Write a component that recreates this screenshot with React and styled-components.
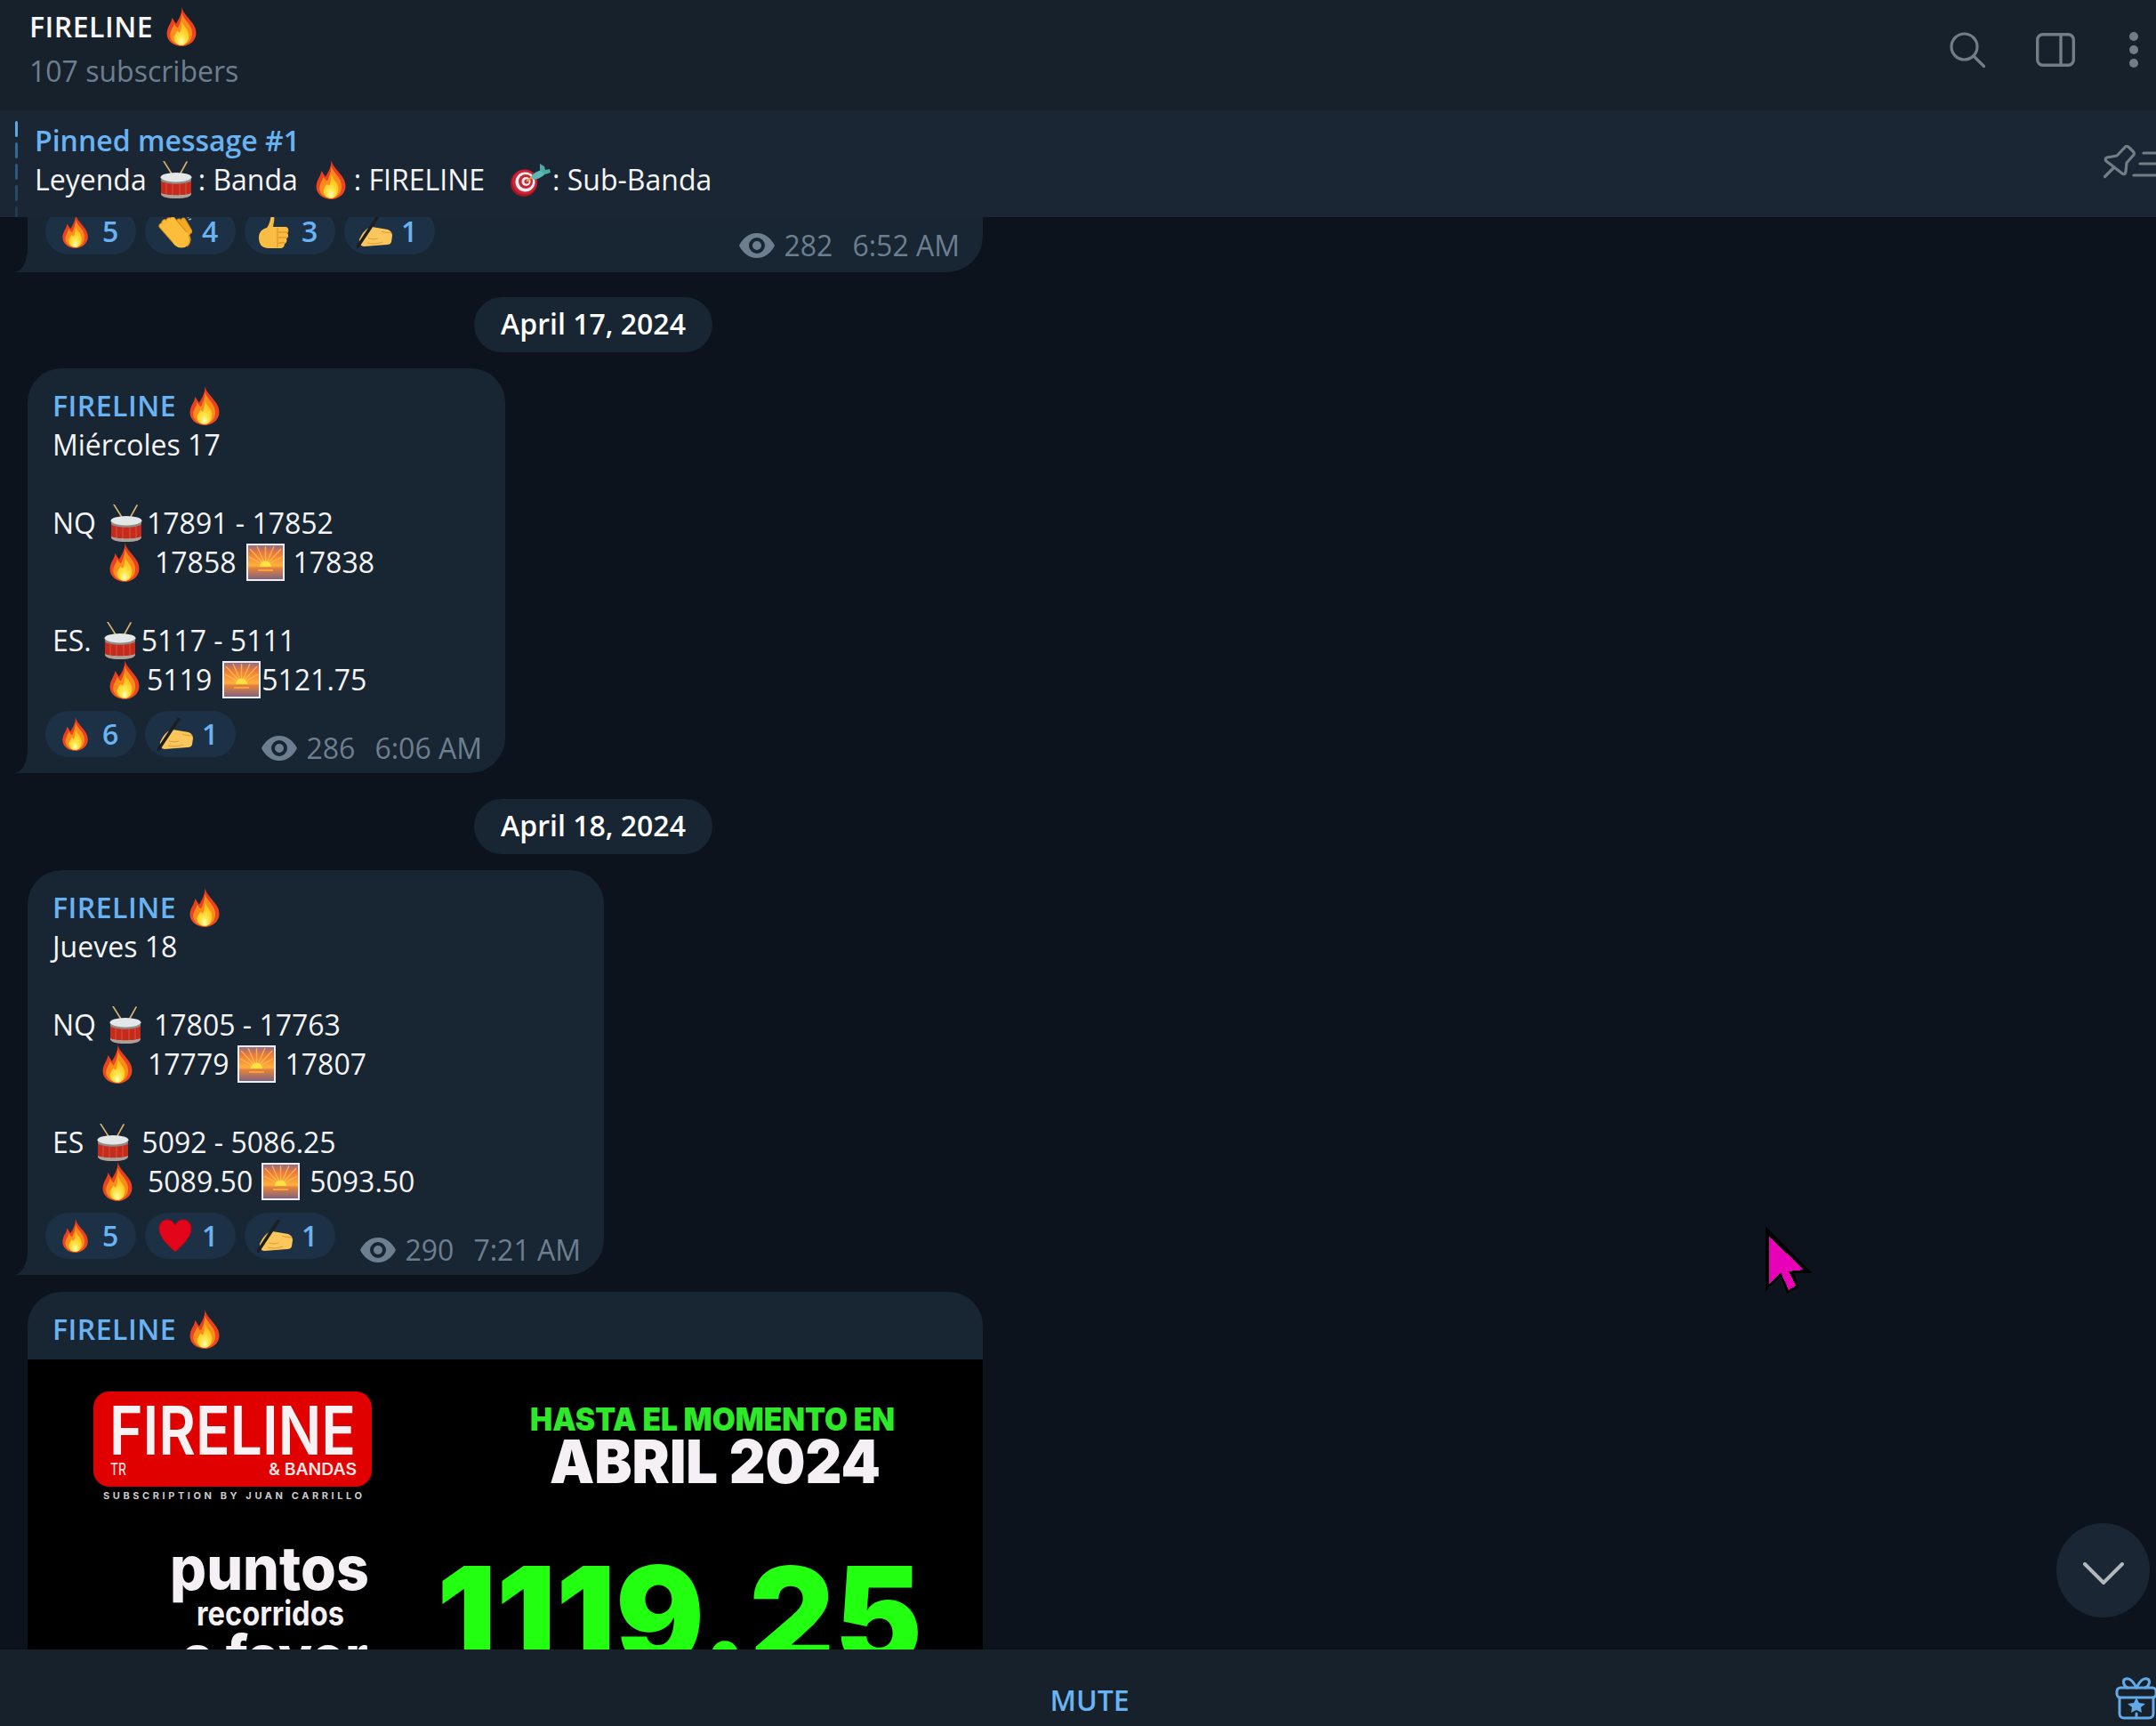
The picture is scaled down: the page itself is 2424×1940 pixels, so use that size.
import styled, { createGlobalStyle } from 'styled-components';

const GlobalStyle = createGlobalStyle`
  html, body {
    margin: 0;
    padding: 0;
    background: #0e1621;
  }
`;

const Page = styled.div`
  position: relative;
  width: 2424px;
  height: 1940px;
  display: flex;
  flex-direction: column;
  overflow: hidden;
  background: #0c131d;
  color: #f5f5f5;
  font-family: "Open Sans", "Noto Sans", sans-serif;
  font-size: 32px;
  line-height: 44px;
`;

const Header = styled.header`
  flex: none;
  height: 124px;
  box-sizing: border-box;
  padding: 8px 20px 0 33px;
  display: flex;
  align-items: flex-start;
  justify-content: space-between;
  background: #17212b;
`;

const TitleBlock = styled.div`
  display: flex;
  flex-direction: column;
  gap: 6px;
`;

const Title = styled.div`
  display: flex;
  align-items: center;
  gap: 14px;
  font-weight: 600;
  letter-spacing: 0.5px;
`;

const Subscribers = styled.div`
  color: #6d7f8f;
`;

const HeaderIcons = styled.div`
  display: flex;
  align-items: center;
  gap: 57px;
  padding-top: 28px;
  color: #737d86;

  & > svg:last-child {
    margin-left: 4px;
  }
`;

const PinnedBar = styled.section`
  flex: none;
  height: 120px;
  box-sizing: border-box;
  padding: 12px 0 0 17px;
  display: flex;
  align-items: flex-start;
  background: #1a2633;
  overflow: hidden;
`;

const PinnedTicks = styled.div`
  flex: none;
  width: 3px;
  display: flex;
  flex-direction: column;
  gap: 6px;
  margin-right: 19px;
`;

const Tick = styled.span`
  display: block;
  height: 18px;
  border-radius: 2px;
  background: ${(p) => p.$color};
`;

const PinnedText = styled.div`
  flex: 1;
`;

const PinnedTitle = styled.div`
  color: #6ab3f3;
  font-weight: 600;
`;

const TextLine = styled.div`
  white-space: pre;
  height: 44px;
  display: flex;
  align-items: center;
`;

const PinButton = styled.div`
  flex: none;
  margin: 27px -5px 0 0;
  color: #737d86;
  display: flex;
`;

const Messages = styled.main`
  flex: 1;
  min-height: 0;
  overflow: hidden;
  padding-left: 31px;
  display: flex;
  flex-direction: column;
`;

const Bubble = styled.article`
  position: relative;
  flex: none;
  width: ${(p) => p.$width}px;
  box-sizing: border-box;
  padding: 20px 26px 18px 20px;
  background: #182533;
  border-radius: 38px 38px 40px 0;

  &::before {
    content: '';
    position: absolute;
    left: -15px;
    bottom: 0;
    width: 15px;
    height: 26px;
    background: radial-gradient(ellipse 15px 26px at 0 0, transparent 98%, #182533 100%);
  }
`;

const ClippedBubble = styled(Bubble)`
  height: 62px;
  padding: 0 26px 20px 20px;
  border-radius: 0 0 40px 0;
  display: flex;
  align-items: flex-end;
  justify-content: space-between;
`;

const PhotoBubble = styled.article`
  flex: none;
  width: 1074px;
  margin-top: 19px;
  background: #182533;
  border-radius: 38px 38px 0 0;
  overflow: hidden;
`;

const PhotoName = styled.div`
  height: 76px;
  box-sizing: border-box;
  padding: 8px 0 0 28px;
  display: flex;
  align-items: center;
  gap: 14px;
  color: #6ab3f3;
  font-weight: 600;
  letter-spacing: 0.5px;
`;

const Poster = styled.svg`
  display: block;
  background: #000;
`;

const BubbleBody = styled.div`
  margin-left: 8px;
`;

const SenderName = styled.div`
  height: 44px;
  display: flex;
  align-items: center;
  gap: 14px;
  color: #6ab3f3;
  font-weight: 600;
  letter-spacing: 0.5px;
`;

const BubbleFooter = styled.div`
  display: flex;
  align-items: flex-end;
  justify-content: space-between;
  margin-top: 13px;
`;

const Reactions = styled.div`
  display: flex;
  gap: 10px;
  flex: none;
`;

const Reaction = styled.div`
  width: 102px;
  height: 52px;
  box-sizing: border-box;
  padding-left: 14px;
  display: flex;
  align-items: center;
  gap: 10px;
  border-radius: 26px;
  background: #1c3146;
  color: #6ab3f3;
  font-weight: 600;
`;

const ReactionEmoji = styled.span`
  flex: none;
  width: 40px;
  display: flex;
  justify-content: center;
`;

const Meta = styled.div`
  display: flex;
  align-items: center;
  height: 44px;
  margin-bottom: -12px;
  color: #6d7f8f;
  flex: none;
`;

const Views = styled.span`
  margin: 0 22px 0 10px;
`;

const DateRow = styled.div`
  flex: none;
  width: 1272px;
  display: flex;
  justify-content: center;
  margin: ${(p) => p.$top}px 0 18px;
`;

const DatePill = styled.div`
  width: 268px;
  height: 62px;
  box-sizing: border-box;
  padding-bottom: 2px;
  display: flex;
  align-items: center;
  justify-content: center;
  border-radius: 31px;
  background: #182533;
  font-weight: 600;
  color: #fff;
`;

const Footer = styled.footer`
  flex: none;
  height: 86px;
  display: flex;
  align-items: flex-end;
  background: #17212b;
`;

const MuteLabel = styled.div`
  flex: 1;
  height: 86px;
  box-sizing: border-box;
  padding: 28px 0 0 72px;
  display: flex;
  align-items: center;
  justify-content: center;
  color: #6ab3f3;
  font-weight: 600;
`;

const GiftButton = styled.div`
  flex: none;
  width: 46px;
  height: 56px;
  overflow: hidden;
  color: #62a9e6;
`;

const ScrollDown = styled.div`
  position: absolute;
  left: 2312px;
  top: 1712px;
  width: 105px;
  height: 106px;
  box-sizing: border-box;
  padding-top: 8px;
  border-radius: 50%;
  background: #1a2633;
  display: flex;
  align-items: center;
  justify-content: center;
  color: #b5b8bb;
`;

const Cursor = styled.svg`
  position: absolute;
  left: 1985px;
  top: 1378px;
`;

const EmojiBox = styled.svg`
  flex: none;
  display: block;
  margin: ${(p) => p.$margin || '0'};
`;

const Fire = ({ w = 37, h = 44, margin }) => (
  <EmojiBox width={w} height={h} viewBox="0 0 32 40" $margin={margin}>
    <defs>
      <linearGradient id="fireOuter" x1="0" y1="0" x2="0" y2="1">
        <stop offset="0" stopColor="#e53a1e" />
        <stop offset="1" stopColor="#ef4a20" />
      </linearGradient>
      <radialGradient id="fireCore" cx="0.5" cy="0.85" r="0.6">
        <stop offset="0" stopColor="#fffde8" />
        <stop offset="0.28" stopColor="#ffee58" />
        <stop offset="1" stopColor="#ffc21a" />
      </radialGradient>
    </defs>
    <path d="M16 0C17 7 25 12 29 20C33 29 29 38 17 40C5 40 -1 32 1 24C2 19 5 17 6 11C8 14 9 16 10 17C13 12 16 7 16 0Z" fill="url(#fireOuter)" />
    <path d="M16 6C17 12 24 16 26 23C28 31 24 38 16.5 39C8 39 3 33 4 27C5 23 7 21 8 17C10 20 11 21 12 21C14 17 16 12 16 6Z" fill="#fb8c1c" />
    <path d="M16 14C17 19 22 22 23 27C24 33 21 38 16.5 39C11 39 7 35 8 30C9 28 10 26 11.5 24C12.5 25.5 13.5 26 14 26C15 23 16 19 16 14Z" fill="url(#fireCore)" />
  </EmojiBox>
);

const Drum = ({ margin }) => (
  <EmojiBox width={36} height={42} viewBox="0 0 36 42" $margin={margin}>
    <path d="M4 0L16 19M30 1L20 19" stroke="#d8b26e" strokeWidth="1.6" strokeLinecap="round" />
    <path d="M1 20H35V37C35 40 28 42 18 42S1 40 1 37Z" fill="#c62a1c" />
    <path d="M7 25V38M14 26V40M22 26V40M29 25V38" stroke="#e88a5a" strokeWidth="0.8" opacity="0.6" />
    <path d="M1 36C6 39 30 39 35 36V37C35 40 28 42 18 42S1 40 1 37Z" fill="#a9a29a" />
    <ellipse cx="18" cy="18.5" rx="17.5" ry="5.5" fill="#e4e7e7" />
    <path d="M1 19C5 25 31 25 35 19V22C31 27 5 27 1 22Z" fill="#8d8d88" />
  </EmojiBox>
);

const Sunrise = ({ margin }) => (
  <EmojiBox width={43} height={42} viewBox="0 0 43 42" $margin={margin}>
    <defs>
      <linearGradient id="sunSky" x1="0" y1="0" x2="0" y2="1">
        <stop offset="0" stopColor="#8a6a8e" />
        <stop offset="0.25" stopColor="#ef7a3a" />
        <stop offset="0.6" stopColor="#ffb13b" />
        <stop offset="0.66" stopColor="#e4833c" />
        <stop offset="1" stopColor="#7c5f82" />
      </linearGradient>
    </defs>
    <rect x="1" y="1" width="41" height="40" fill="url(#sunSky)" stroke="#eceff1" strokeWidth="2" />
    <path d="M21.5 25L4 6M21.5 25L12 3M21.5 25V3M21.5 25L31 3M21.5 25L39 6M21.5 25L3 15M21.5 25L40 15" stroke="#ffc04d" strokeWidth="1.4" opacity="0.8" />
    <path d="M15 26A6.5 6.5 0 0 1 28 26Z" fill="#ffe23f" />
    <rect x="13" y="29" width="17" height="2" fill="#f9a03f" />
  </EmojiBox>
);

const Target = ({ margin }) => (
  <EmojiBox width={46} height={37} viewBox="0 0 46 37" $margin={margin}>
    <ellipse cx="16" cy="22" rx="15" ry="15" fill="#a3152a" />
    <circle cx="17" cy="20.5" r="14" fill="#cf2233" />
    <circle cx="17.5" cy="20.5" r="11" fill="#eceff1" />
    <circle cx="18" cy="20" r="8" fill="#c62838" />
    <circle cx="18.5" cy="20" r="5" fill="#eceff1" />
    <circle cx="19" cy="20" r="2.6" fill="#c62838" />
    <path d="M19 20L25 15" stroke="#e8a33a" strokeWidth="2.2" />
    <path d="M24 15C27 10 32 8 36 7L40 11C38 14 33 17 27 18Z" fill="#5cb8b2" />
    <path d="M34 8L34 0L39 3L40 7L45 6L46 10L40 12Z" fill="#4fa8a3" />
  </EmojiBox>
);

const Clap = () => (
  <EmojiBox width={38} height={40} viewBox="0 0 38 40">
    <g fill="none" strokeLinecap="round">
      <path d="M18 11L30 24M23 9L33 22M28 8L35 20" stroke="#d98a14" strokeWidth="6.5" />
      <path d="M18 11L30 24M23 9L33 22M28 8L35 20" stroke="#f3a826" strokeWidth="4.6" />
      <path d="M4 14L18 30M7 10L22 27M12 8L26 24M16 7L28 21" stroke="#d98a14" strokeWidth="7" />
      <path d="M4 14L18 30M7 10L22 27M12 8L26 24M16 7L28 21" stroke="#fbbd3a" strokeWidth="5" />
    </g>
    <ellipse cx="26" cy="29" rx="10.5" ry="9.5" fill="#fbbd3a" />
    <path d="M34 24C37 28 36 34 32 37" stroke="#d98a14" strokeWidth="1.4" fill="none" />
    <path d="M3 2L5 4M9 1L10 4M30 1L29 4M35 2L33 5M37 6L34 7" stroke="#9fb1bd" strokeWidth="1.4" />
  </EmojiBox>
);

const Thumb = () => (
  <EmojiBox width={38} height={38} viewBox="0 0 38 38">
    <path d="M15 0C18 0 19 4 18 8L17 14H31C35 14 35 20 33 21C35 23 34 27 32 27C33 30 32 33 30 33C30 36 28 38 25 38H12C4 38 1 33 1 26C1 19 6 16 10 15C13 11 14 6 15 0Z" fill="#f9bd45" />
    <path d="M23 20H34M23 26H33M23 32H31M22 15V37" stroke="#e39a22" strokeWidth="1.4" fill="none" />
  </EmojiBox>
);

const Writing = () => (
  <EmojiBox width={40} height={37} viewBox="0 0 40 37">
    <path d="M3 27C7 19 11 14 17 13L35 16Q40 18 40 23L39 30Q38 33 34 33L8 35Q2 34 3 27Z" fill="#fbc75d" />
    <path d="M12 31C18 33 24 32 29 30M13 26C17 27 21 27 24 26M28 18C32 20 36 19 39 20" stroke="#e0a03a" strokeWidth="1.2" fill="none" />
    <path d="M1 35.5L24 1" stroke="#1c1e20" strokeWidth="3.6" strokeLinecap="round" />
    <path d="M0 37L1 31L5 33Z" fill="#1c1e20" />
  </EmojiBox>
);

const Heart = () => (
  <EmojiBox width={38} height={38} viewBox="0 0 38 38">
    <path d="M19 37C10 29 1 20 1 11C1 5 5 1 10 1C14 1 17 3 19 7C21 3 24 1 28 1C33 1 37 5 37 11C37 20 28 29 19 37Z" fill="#e3061b" stroke="#a40d1c" strokeWidth="1" />
  </EmojiBox>
);

const EyeIcon = () => (
  <svg width="40" height="28" viewBox="0 0 40 28" fill="none">
    <path fillRule="evenodd" d="M20 0C29 0 36 6 40 14C36 22 29 28 20 28C11 28 4 22 0 14C4 6 11 0 20 0ZM20 5A9 9 0 1 0 20 23A9 9 0 1 0 20 5ZM20 9A5 5 0 1 1 20 19A5 5 0 1 1 20 9Z" fill="#6d7f8f" />
  </svg>
);

const SearchIcon = () => (
  <svg width="40" height="40" viewBox="0 0 40 40" fill="none" stroke="currentColor" strokeWidth="3.2" strokeLinecap="round">
    <circle cx="16.5" cy="16.5" r="14.5" />
    <path d="M27 27L38.5 38.5" />
  </svg>
);

const SidebarIcon = () => (
  <svg width="44" height="38" viewBox="0 0 44 38" fill="none" stroke="currentColor" strokeWidth="3.4">
    <rect x="1.7" y="1.7" width="40.6" height="34.6" rx="6" />
    <path d="M28 2V36" />
  </svg>
);

const DotsIcon = () => (
  <svg width="10" height="40" viewBox="0 0 10 40" fill="currentColor">
    <circle cx="5" cy="5" r="5" />
    <circle cx="5" cy="20" r="5" />
    <circle cx="5" cy="35" r="5" />
  </svg>
);

const PinListIcon = () => (
  <svg width="64" height="38" viewBox="0 0 64 38" fill="none" stroke="currentColor" strokeWidth="3.2" strokeLinecap="round" strokeLinejoin="round">
    <path d="M25 1.5Q27 1 29 3L33 7Q35 9 34 11L26 20L25 30Q24 34 21 32L3 18Q1 15 4 14L15 12Z" />
    <path d="M1.5 35.5L11 26" />
    <path d="M45 9H64M41 21H64M34 34H64" />
  </svg>
);

const ChevronIcon = () => (
  <svg width="46" height="26" viewBox="0 0 46 26" fill="none" stroke="currentColor" strokeWidth="4" strokeLinecap="round" strokeLinejoin="round">
    <path d="M2 2L23 23L44 2" />
  </svg>
);

const GiftIcon = () => (
  <svg width="48" height="50" viewBox="0 0 48 50" fill="none" stroke="currentColor" strokeWidth="3" strokeLinecap="round" strokeLinejoin="round">
    <path d="M24 13C20 5 16 2 12 3C8 4 9 11 14 13M24 13C28 5 32 2 36 3C40 4 39 11 34 13" />
    <rect x="2" y="13" width="44" height="11" rx="4" />
    <path d="M5 24V42C5 45 7 47 10 47H38C41 47 43 45 43 42V24" />
    <path d="M24 42V47" />
    <path d="M24 24L27 30L34 31L29 35L30 41L24 38L18 41L19 35L14 31L21 30Z" fill="currentColor" stroke="none" />
  </svg>
);

const reactionFire = <Fire w={32} h={38} />;

const ReactionList = ({ items }) => (
  <Reactions>
    {items.map(([emoji, count], i) => (
      <Reaction key={i}>
        <ReactionEmoji>{emoji}</ReactionEmoji>
        <span>{count}</span>
      </Reaction>
    ))}
  </Reactions>
);

const MessageMeta = ({ views, time }) => (
  <Meta>
    <EyeIcon />
    <Views>{views}</Views>
    <span>{time}</span>
  </Meta>
);

const PosterArt = () => (
  <Poster width="1074" height="326" viewBox="0 0 1074 326" fontFamily="Inter, sans-serif">
    <rect x="74" y="36" width="313" height="107" rx="18" fill="#e00000" />
    <text x="92" y="107" fontSize="75" fontWeight="600" fill="#f7f2f4" textLength="277" lengthAdjust="spacingAndGlyphs">FIRELINE</text>
    <text x="93" y="130" fontSize="18" fontWeight="500" fill="#f3d8d8" textLength="18" lengthAdjust="spacingAndGlyphs">TR</text>
    <text x="271" y="130" fontSize="18" fontWeight="600" fill="#f7e4e4" textLength="99" lengthAdjust="spacingAndGlyphs">&amp; BANDAS</text>
    <text x="85" y="157" fontSize="11" fontWeight="700" fill="#c9c9c9" textLength="291">SUBSCRIPTION BY JUAN CARRILLO</text>
    <text x="565" y="80" fontSize="35" fontWeight="900" fill="#2ee82a" textLength="410" lengthAdjust="spacingAndGlyphs">HASTA EL MOMENTO EN</text>
    <text x="587" y="139" fontSize="68" fontWeight="900" fill="#f4f0f4" textLength="372" lengthAdjust="spacingAndGlyphs">ABRIL 2024</text>
    <text x="160" y="259" fontSize="68" fontWeight="800" fill="#f4f0f4" textLength="224" lengthAdjust="spacingAndGlyphs">puntos</text>
    <text x="190" y="299" fontSize="38" fontWeight="700" fill="#f4f0f4" textLength="166" lengthAdjust="spacingAndGlyphs">recorridos</text>
    <text x="173" y="359" fontSize="68" fontWeight="800" fill="#f4f0f4" textLength="210" lengthAdjust="spacingAndGlyphs">a favor</text>
    <text x="460" y="345" fontSize="155" fontWeight="900" fill="#22ff11" textLength="546" lengthAdjust="spacingAndGlyphs">1119.25</text>
  </Poster>
);

const App = () => (
  <Page>
    <GlobalStyle />
    <Header>
      <TitleBlock>
        <Title>
          FIRELINE
          <Fire />
        </Title>
        <Subscribers>107 subscribers</Subscribers>
      </TitleBlock>
      <HeaderIcons>
        <SearchIcon />
        <SidebarIcon />
        <DotsIcon />
      </HeaderIcons>
    </Header>

    <PinnedBar>
      <PinnedTicks>
        <Tick $color="#5ea8e6" />
        <Tick $color="#2f6a99" />
        <Tick $color="#2a5a80" />
        <Tick $color="#264b69" />
        <Tick $color="#213a50" />
      </PinnedTicks>
      <PinnedText>
        <PinnedTitle>Pinned message #1</PinnedTitle>
        <TextLine>
          Leyenda
          <Drum margin="0 7px 0 15px" />
          : Banda
          <Fire margin="0 7px 0 19px" />
          : FIRELINE
          <Target margin="0 2px 0 28px" />
          : Sub-Banda
        </TextLine>
      </PinnedText>
      <PinButton>
        <PinListIcon />
      </PinButton>
    </PinnedBar>

    <Messages>
      <ClippedBubble $width={1074}>
        <ReactionList
          items={[
            [reactionFire, 5],
            [<Clap />, 4],
            [<Thumb />, 3],
            [<Writing />, 1],
          ]}
        />
        <MessageMeta views="282" time="6:52 AM" />
      </ClippedBubble>

      <DateRow $top={28}>
        <DatePill>April 17, 2024</DatePill>
      </DateRow>

      <Bubble $width={537}>
        <BubbleBody>
          <SenderName>
            FIRELINE
            <Fire />
          </SenderName>
          <TextLine>Miércoles 17</TextLine>
          <TextLine> </TextLine>
          <TextLine>
            NQ
            <Drum margin="0 5px 0 16px" />
            17891 - 17852
          </TextLine>
          <TextLine>
            <Fire margin="0 15px 0 63px" />
            17858
            <Sunrise margin="0 9px 0 12px" />
            17838
          </TextLine>
          <TextLine> </TextLine>
          <TextLine>
            ES.
            <Drum margin="0 6px 0 14px" />
            5117 - 5111
          </TextLine>
          <TextLine>
            <Fire margin="0 6px 0 63px" />
            5119
            <Sunrise margin="0 1px 0 12px" />
            5121.75
          </TextLine>
        </BubbleBody>
        <BubbleFooter>
          <ReactionList items={[[reactionFire, 6], [<Writing />, 1]]} />
          <MessageMeta views="286" time="6:06 AM" />
        </BubbleFooter>
      </Bubble>

      <DateRow $top={29}>
        <DatePill>April 18, 2024</DatePill>
      </DateRow>

      <Bubble $width={648}>
        <BubbleBody>
          <SenderName>
            FIRELINE
            <Fire />
          </SenderName>
          <TextLine>Jueves 18</TextLine>
          <TextLine> </TextLine>
          <TextLine>
            NQ
            <Drum margin="0 14px 0 15px" />
            17805 - 17763
          </TextLine>
          <TextLine>
            <Fire margin="0 15px 0 55px" />
            17779
            <Sunrise margin="0 10px 0 10px" />
            17807
          </TextLine>
          <TextLine> </TextLine>
          <TextLine>
            ES
            <Drum margin="0 14px 0 15px" />
            5092 - 5086.25
          </TextLine>
          <TextLine>
            <Fire margin="0 15px 0 55px" />
            5089.50
            <Sunrise margin="0 11px 0 10px" />
            5093.50
          </TextLine>
        </BubbleBody>
        <BubbleFooter>
          <ReactionList items={[[reactionFire, 5], [<Heart />, 1], [<Writing />, 1]]} />
          <MessageMeta views="290" time="7:21 AM" />
        </BubbleFooter>
      </Bubble>

      <PhotoBubble>
        <PhotoName>
          FIRELINE
          <Fire />
        </PhotoName>
        <PosterArt />
      </PhotoBubble>
    </Messages>

    <Footer>
      <MuteLabel>MUTE</MuteLabel>
      <GiftButton>
        <GiftIcon />
      </GiftButton>
    </Footer>

    <ScrollDown>
      <ChevronIcon />
    </ScrollDown>

    <Cursor width="53" height="77" viewBox="0 0 53 77" shapeRendering="crispEdges">
      <polygon points="0,0 52,53 32,53 38,69 24,76 17,56 0,73" fill="#000" />
      <polygon points="4,12 43,49 26,51 34,67 26,72 17,52 4,65" fill="#e800b8" />
    </Cursor>
  </Page>
);

export default App;
